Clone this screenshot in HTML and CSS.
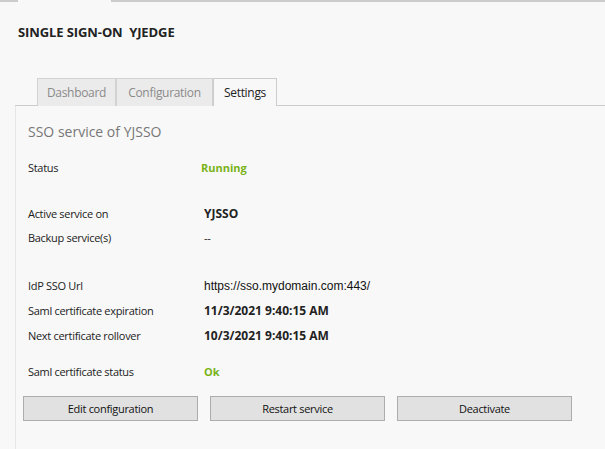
FILE: index.html
```html
<!DOCTYPE html>
<html lang="en">
<head>
    <meta charset="UTF-8">
    <title>Single Sign-On YJEDGE</title>
    <link rel="stylesheet" href="styles.css">
</head>
<body>
    <div class="top-strip">
        <div class="strip-fill left"></div>
        <div class="strip-tab"></div>
        <div class="strip-fill right"></div>
    </div>

    <h1 class="page-title">SINGLE SIGN-ON&nbsp; YJEDGE</h1>

    <div class="tabs">
        <div class="tab tab-dashboard">Dashboard</div>
        <div class="tab tab-config">Configuration</div>
        <div class="tab tab-settings active">Settings</div>
    </div>

    <div class="panel">
        <h2 class="panel-title">SSO service of YJSSO</h2>

        <div class="row">
            <span class="label">Status</span>
            <span class="value ok">Running</span>
        </div>

        <div class="row spaced">
            <span class="label">Active service on</span>
            <span class="value bold">YJSSO</span>
        </div>
        <div class="row tall">
            <span class="label">Backup service(s)</span>
            <span class="value dash">--</span>
        </div>

        <div class="row spaced">
            <span class="label">IdP SSO Url</span>
            <span class="value url">https://sso.mydomain.com:443/</span>
        </div>
        <div class="row">
            <span class="label">Saml certificate expiration</span>
            <span class="value bold">11/3/2021 9:40:15 AM</span>
        </div>
        <div class="row">
            <span class="label">Next certificate rollover</span>
            <span class="value bold">10/3/2021 9:40:15 AM</span>
        </div>

        <div class="row spaced-small">
            <span class="label">Saml certificate status</span>
            <span class="value ok shifted">Ok</span>
        </div>

        <div class="actions">
            <button class="btn">Edit configuration</button>
            <button class="btn">Restart service</button>
            <button class="btn">Deactivate</button>
        </div>
    </div>
</body>
</html>
```

FILE: styles.css
```css
body {
    margin: 0;
    background-color: #f8f8f8;
    font-family: 'Open Sans', 'Noto Sans', sans-serif;
    color: #222222;
    width: 605px;
    height: 449px;
    overflow: hidden;
}

/* outer tab strip, cut off at the top */
.top-strip {
    display: flex;
    height: 2px;
}

.strip-fill {
    border-bottom: 2px solid #cccccc;
}

.strip-fill.left {
    width: 16px;
    border-right: 2px solid #cccccc;
}

.strip-tab {
    width: 93px;
}

.strip-fill.right {
    flex-grow: 1;
    border-left: 2px solid #cccccc;
}

.page-title {
    margin: 0;
    padding: 21px 0 0 18px;
    height: 55px;
    box-sizing: border-box;
    font-size: 13px;
    font-weight: bold;
    color: #222222;
    letter-spacing: -0.1px;
}

.tabs {
    display: flex;
    margin-top: 21px;
    padding-left: 22px;
    margin-left: 15px;
    border-bottom: 1px solid #cccccc;
    height: 27px;
}

.tab {
    box-sizing: border-box;
    height: 28px;
    padding-top: 5px;
    text-align: center;
    font-size: 12px;
    letter-spacing: -0.3px;
    color: #8a8a8a;
    background-color: #ebebeb;
    border: 1px solid #d2d2d2;
    border-bottom: none;
}

.tab-dashboard { width: 79px; }
.tab-config { width: 97px; }
.tab-settings { width: 64px; }

.tab.active {
    color: #222222;
    background-color: #f8f8f8;
    border-color: #cccccc;
    position: relative;
    z-index: 1;
}

.panel {
    box-sizing: border-box;
    margin-left: 15px;
    border-left: 1px solid #e6e6e6;
    padding: 16px 0 0 12px;
    height: 343px;
}

.panel-title {
    margin: 0 0 14px;
    font-size: 14px;
    font-weight: normal;
    color: #777777;
}

.row {
    display: flex;
    align-items: center;
    height: 25px;
    font-size: 11px;
    letter-spacing: -0.3px;
}

.row.tall {
    height: 26px;
    align-items: flex-start;
    padding-top: 4px;
    box-sizing: border-box;
}

.row.spaced {
    margin-top: 21px;
}

.row.spaced-small {
    margin-top: 11px;
}

.label {
    width: 173px;
    flex-shrink: 0;
}

.value.bold {
    font-weight: bold;
    font-size: 12px;
    letter-spacing: 0;
    padding-left: 3px;
}

.value.ok {
    font-weight: bold;
    letter-spacing: 0;
    color: #7ab317;
}

.value.shifted {
    padding-left: 3px;
}

.value.dash {
    padding-left: 3px;
}

.value.url {
    font-family: 'Liberation Sans', Arial, sans-serif;
    font-size: 12px;
    letter-spacing: 0;
    color: #111111;
    padding-left: 3px;
}

.actions {
    display: flex;
    gap: 12px;
    margin-top: 12px;
    margin-left: -5px;
}

.btn {
    width: 175px;
    height: 25px;
    background-color: #e1e1e1;
    border: 1px solid #adadad;
    font-family: 'Open Sans', 'Noto Sans', sans-serif;
    font-size: 11px;
    letter-spacing: -0.3px;
    color: #111111;
    padding: 0;
}
```
